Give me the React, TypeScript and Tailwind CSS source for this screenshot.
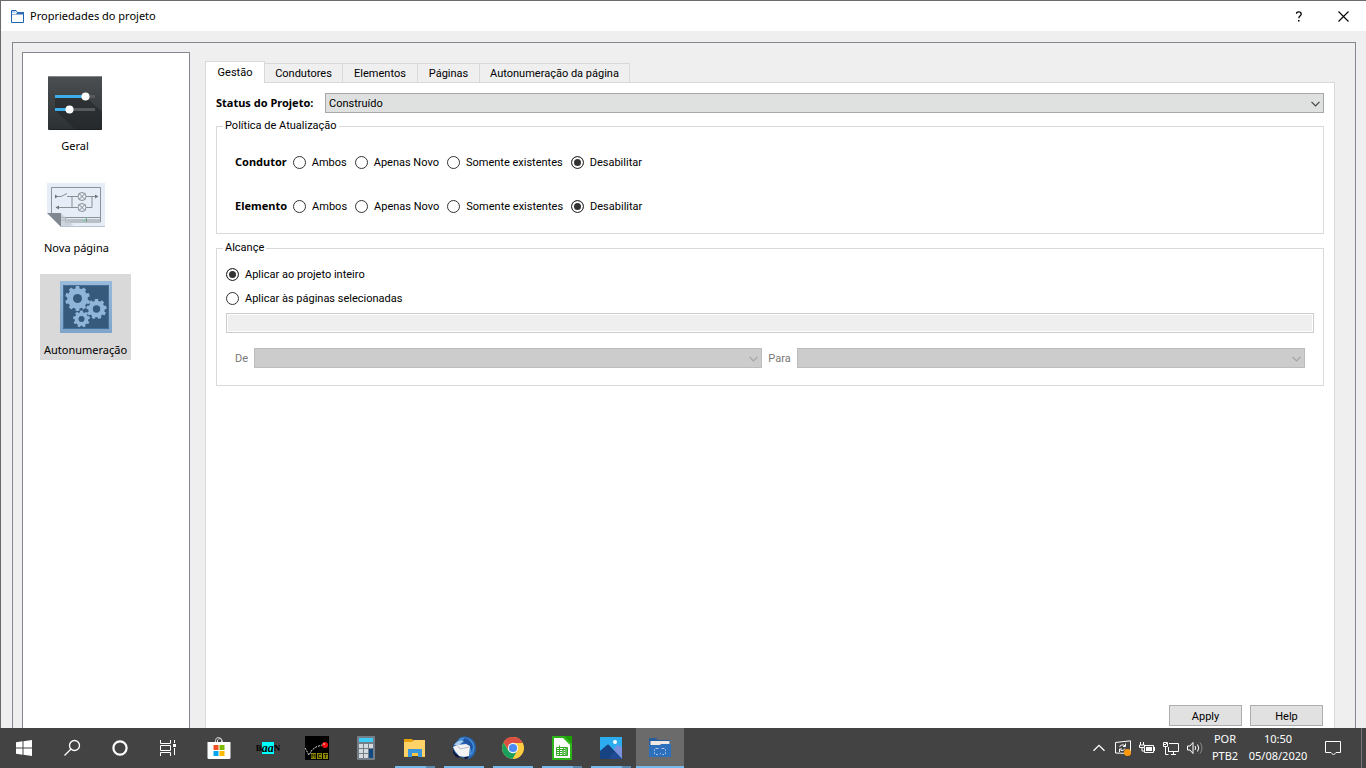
import React from "react";

const ui = "font-['Roboto','Noto_Sans',sans-serif]";
const strong = "font-['Noto_Sans','Open_Sans',sans-serif] font-bold";
const segoe = "font-['Noto_Sans','Open_Sans',sans-serif]";

/* ---------- Dialog icons ---------- */

function FolderIcon() {
  return (
    <svg width="13" height="13" viewBox="0 0 13 13" className="shrink-0" aria-hidden="true">
      <path d="M.5 12.500V.5H5l1.500 2h6v10z" fill="#fff" stroke="#1f62b4" />
      <path d="M0 4h5l1.500-2H13v2.500H0z" fill="#2a6cbc" />
      <path d="M1 1h3.500v2H1z" fill="#b9d2ef" />
    </svg>
  );
}

function SlidersIcon() {
  return (
    <svg width="54" height="54" viewBox="0 0 54 54" aria-hidden="true">
      <defs>
        <linearGradient id="sl" x1="0" y1="0" x2="0" y2="1">
          <stop offset="0" stopColor="#4b4f52" />
          <stop offset="1" stopColor="#2c3134" />
        </linearGradient>
      </defs>
      <rect width="54" height="54" rx="1" fill="url(#sl)" />
      <path d="M7 22 37 20 54 36V54H28L7 34z" fill="#1f2224" opacity=".5" />
      <path d="M1 .5h52" stroke="#85888a" />
      <path d="M1 53.500h52" stroke="#1e2123" />
      <path d="M37 20.500h10M22 33.500h25" stroke="#57595c" strokeWidth="3" />
      <path d="M7 20.500h30M7 33.500h15" stroke="#3daee9" strokeWidth="3" />
      <circle cx="37.500" cy="20.500" r="4" fill="#fff" />
      <circle cx="21.500" cy="33.500" r="4" fill="#fff" />
    </svg>
  );
}

function SheetIcon() {
  return (
    <svg width="58" height="44" viewBox="0 0 58 44" aria-hidden="true">
      <path d="M0 0h58v44H14L0 30z" fill="#e6edf6" />
      <path d="M14 43.500h44" stroke="#b9c5d6" />
      <path d="M4.500 30V4.500h49v34.500H18" fill="none" stroke="#8c9298" />
      <path d="M14 34.500h40M14 37h40M18.500 34v5M39.500 34v5" stroke="#8c9298" fill="none" />
      <g fill="none" stroke="#8a8f94">
        <path d="M8 13.500h6l6-3M20 13.500h30M25 13.500v11M45 13.500v11M9 24.500h36" />
        <circle cx="35" cy="13.500" r="4" fill="#e6edf6" />
        <circle cx="35" cy="24.500" r="4" fill="#e6edf6" />
        <path d="m32 10.500 6 6m0-6-6 6M32 21.500l6 6m0-6-6 6" />
      </g>
      <path d="M8 11.500l3 2-3 2zM48 11.500l3.500 2-3.500 2zM12 22.500l-3.500 2 3.500 2z" fill="#70767c" />
      <path d="m35 36.500 2 2 3-4" fill="none" stroke="#6fd09b" />
      <path d="M14 30l12 12-4 1-8 0z" fill="#c3c9d0" opacity=".7" />
      <path d="M0 30h14v14z" fill="#7f8790" />
    </svg>
  );
}

function gear(cx: number, cy: number, r: number, ri: number, teeth: number): string {
  const step = (Math.PI * 2) / teeth;
  const points: string[] = [];
  for (let i = 0; i < teeth; i++) {
    const a = i * step - Math.PI / 2;
    [
      [-0.32, ri],
      [-0.22, r],
      [0.22, r],
      [0.32, ri],
    ].forEach(([k, radius]) => {
      points.push(`${(cx + Math.cos(a + k * step) * radius).toFixed(2)} ${(cy + Math.sin(a + k * step) * radius).toFixed(2)}`);
    });
  }
  return `M${points.join("L")}Z`;
}

function GearsIcon() {
  return (
    <svg width="52" height="52" viewBox="0 0 52 52" aria-hidden="true">
      <defs>
        <linearGradient id="gf" x1="0" y1="0" x2="0" y2="1">
          <stop offset="0" stopColor="#98bbdb" />
          <stop offset="1" stopColor="#7fa5cb" />
        </linearGradient>
      </defs>
      <rect width="52" height="52" fill="url(#gf)" />
      <rect x="3.500" y="4.500" width="45" height="43" fill="#365a7c" stroke="#456f97" />
      <g fill="#8fb5d9">
        <path d={gear(17.5, 17.5, 12.5, 10.3, 10)} />
        <path d={gear(36.5, 28, 10.2, 8.2, 9)} />
        <path d={gear(21.5, 38, 8.5, 6.8, 9)} />
      </g>
      <g fill="#365a7c">
        <circle cx="17.500" cy="17.500" r="4.500" />
        <circle cx="36.500" cy="28" r="3.700" />
        <circle cx="21.500" cy="38" r="3" />
      </g>
    </svg>
  );
}

/* ---------- Form controls ---------- */

type ComboProps = { id: string; options?: string[]; disabled?: boolean };

function Combo({ id, options = [], disabled = false }: ComboProps) {
  return (
    <span className="relative flex min-w-0 flex-1">
      <select
        id={id}
        disabled={disabled}
        className="h-5 w-full appearance-none border border-[#a6a9a8] bg-[#dfe1e0] pl-[3px] pr-5 pt-0.5 text-[11px] leading-4 text-black opacity-100 disabled:border-[#bcbcbc] disabled:bg-[#cccccc]"
      >
        {options.map((o) => (
          <option key={o}>{o}</option>
        ))}
      </select>
      <svg
        width="9"
        height="6"
        viewBox="0 0 9 6"
        className={`pointer-events-none absolute right-1 top-2 ${disabled ? "text-[#a3a3a3]" : "text-[#444444]"}`}
        aria-hidden="true"
      >
        <path d="m.5.800 4 4 4-4" fill="none" stroke="currentColor" strokeWidth="1.200" />
      </svg>
    </span>
  );
}

function Radio({ name, label, checked = false }: { name: string; label: string; checked?: boolean }) {
  return (
    <label className="flex h-4 items-center gap-1.5 whitespace-nowrap">
      <input
        type="radio"
        name={name}
        defaultChecked={checked}
        className="size-[13px] shrink-0 appearance-none rounded-full border border-[#333333] bg-white checked:bg-[#333333] checked:shadow-[inset_0_0_0_2px_white]"
      />
      <span className="pt-0.5">{label}</span>
    </label>
  );
}

const policies = ["Ambos", "Apenas Novo", "Somente existentes", "Desabilitar"];

function PolicyRow({ title, name }: { title: string; name: string }) {
  return (
    <div role="radiogroup" aria-label={title} className="flex h-5 items-center gap-2">
      <div className="flex items-center gap-1.5">
        <span className={strong}>{title}</span>
        <Radio name={name} label={policies[0]} />
      </div>
      {policies.slice(1).map((p) => (
        <Radio key={p} name={name} label={p} checked={p === "Desabilitar"} />
      ))}
    </div>
  );
}

const pages = [
  { label: "Geral", icon: <SlidersIcon /> },
  { label: "Nova página", icon: <SheetIcon /> },
  { label: "Autonumeração", icon: <GearsIcon />, selected: true },
];

const tabs = [
  { label: "Gestão", width: "w-[60px]" },
  { label: "Condutores", width: "w-[78px]" },
  { label: "Elementos", width: "w-[75px]" },
  { label: "Páginas", width: "w-[62px]" },
  { label: "Autonumeração da página", width: "w-[150px]" },
];

function Dialog() {
  return (
    <main className="flex min-h-0 flex-1 flex-col overflow-hidden border-l border-t border-[#6b6b6b] bg-[#efefef]">
      <header className="flex h-[30px] shrink-0 items-center bg-white pl-2.5">
        <FolderIcon />
        <h1 className={`ml-1.5 flex-1 text-[11px] ${segoe}`}>Propriedades do projeto</h1>
        <button aria-label="Ajuda" className="flex h-full w-[45px] items-center justify-center">
          <svg width="8" height="11" viewBox="0 0 8 11" aria-hidden="true">
            <path d="M1.500 2.800Q1.500.800 3.800.800T6.200 2.900Q6.200 4 5 4.900T3.800 7.200" fill="none" stroke="#000" strokeWidth="1.300" />
            <path d="M3 9h1.500v1.500H3z" />
          </svg>
        </button>
        <button aria-label="Fechar" className="flex h-full w-[45px] items-center justify-center">
          <svg width="11" height="11" viewBox="0 0 11 11" aria-hidden="true">
            <path d="m.5.500 10 10m0-10-10 10" stroke="#000" strokeWidth="1.100" />
          </svg>
        </button>
      </header>

      <div className="ml-[11px] mr-2.5 mt-[11px] flex min-h-0 flex-1 gap-[15px] border border-b-0 border-[#828790] pl-[9px] pr-5 pt-[9px]">
        <nav className="flex w-[168px] shrink-0 flex-col items-start gap-4 border border-b-0 border-[#828790] bg-white pl-[17px] pt-[17px]">
          {pages.map((p) => (
            <button
              key={p.label}
              className={`flex h-[86px] min-w-[70px] flex-col items-center px-1 leading-5 ${segoe} ${p.selected ? "bg-[#d9d9d9]" : ""}`}
            >
              <span className="flex h-[66px] items-center justify-center">{p.icon}</span>
              {p.label}
            </button>
          ))}
        </nav>

        <div className="flex min-w-0 flex-1 flex-col pt-[9px]">
          <div role="tablist" className="z-10 -mb-px flex shrink-0 items-end">
            {tabs.map((t, i) => (
              <button
                key={t.label}
                role="tab"
                aria-selected={i === 0}
                className={`${t.width} whitespace-nowrap border border-[#d9d9d9] text-center ${
                  i === 0 ? "h-[22px] border-b-0 bg-white" : "h-5 border-l-0 bg-[#efefef] pt-0.5"
                }`}
              >
                {t.label}
              </button>
            ))}
          </div>
          <section className="flex min-h-0 flex-1 flex-col border border-b-0 border-[#d9d9d9] bg-white px-2.5 pb-0.5 pt-2.5">
            <div className="flex items-center gap-1.5">
              <label htmlFor="status" className={`w-[103px] whitespace-nowrap ${strong}`}>
                Status do Projeto:
              </label>
              <Combo id="status" options={["Construído"]} />
            </div>

            <fieldset className="mt-[5px] h-[116px] border border-[#d9d9d9] px-[18px] pt-[18px]">
              <legend className="-ml-3 px-0.5">Política de Atualização</legend>
              <div className="flex flex-col gap-6">
                <PolicyRow title="Condutor" name="condutor" />
                <PolicyRow title="Elemento" name="elemento" />
              </div>
            </fieldset>

            <fieldset className="mt-1.5 h-[146px] border border-[#d9d9d9] px-[9px] pt-2.5">
              <legend className="-ml-[3px] px-0.5">Alcançe</legend>
              <div className="flex flex-col gap-2">
                <Radio name="alcance" label="Aplicar ao projeto inteiro" checked />
                <Radio name="alcance" label="Aplicar às páginas selecionadas" />
              </div>
              <input
                disabled
                aria-label="Páginas selecionadas"
                className="mt-[7px] block h-5 w-full border border-[#cccccc] bg-[#efefef] shadow-[inset_0_0_0_1px_white]"
              />
              <div className="mt-[15px] flex items-center gap-1.5 px-[9px] text-[#787878]">
                <label htmlFor="de" className="pt-0.5">De</label>
                <Combo id="de" disabled />
                <label htmlFor="para" className="pt-0.5">Para</label>
                <Combo id="para" disabled />
              </div>
            </fieldset>

            <div className="mt-auto flex justify-end gap-2 pr-px">
              {["Apply", "Help"].map((b) => (
                <button key={b} className="h-[21px] w-[73px] border border-[#adadad] bg-[#e1e1e1] pt-0.5 leading-4">
                  {b}
                </button>
              ))}
            </div>
          </section>
        </div>
      </div>
    </main>
  );
}

/* ---------- Taskbar ---------- */

const icon = { width: 24, height: 24, viewBox: "0 0 24 24", "aria-hidden": true };

const system = [
  {
    name: "Iniciar",
    icon: (
      <svg {...icon}>
        <path d="M4 6.300 10.500 5.300V11.500H4zM11.500 5.200 20 4v7.500h-8.500zM4 12.500h6.500v6.200L4 17.700zM11.500 12.500H20V20l-8.500-1.200z" fill="#fff" />
      </svg>
    ),
  },
  {
    name: "Pesquisar",
    icon: (
      <svg {...icon} fill="none" stroke="#fff" strokeWidth="1.300">
        <circle cx="14.500" cy="9.500" r="5" />
        <path d="m11 13-6.500 6.500" />
      </svg>
    ),
  },
  {
    name: "Cortana",
    icon: (
      <svg {...icon}>
        <circle cx="12" cy="12" r="6.600" fill="none" stroke="#fff" strokeWidth="2.200" />
      </svg>
    ),
  },
  {
    name: "Visão de tarefas",
    icon: (
      <svg {...icon} fill="none" stroke="#fff">
        <path d="M4.500 4v3.500h10V4M4.500 20v-3.500h10V20M4.500 9.500h10v5h-10zM18.500 4v3M18.500 12v7" />
        <path d="M17 8h3v3h-3z" fill="#fff" stroke="none" />
      </svg>
    ),
  },
];

const apps = [
  {
    name: "Microsoft Store",
    icon: (
      <svg {...icon}>
        <path d="M8.500 7V4.500q0-3 3-3t3 3V7M10.500 7V4q1-1.500 3-1.500 2 .5 2 4" fill="none" stroke="#d8d8d8" />
        <path d="M.5 6h23v15.500q0 1.500-1.500 1.500H2Q.5 23 .5 21.500z" fill="#fff" />
        <path d="M6.500 9h5v5h-5z" fill="#f25022" />
        <path d="M12.500 9h5v5h-5z" fill="#7fba00" />
        <path d="M6.500 15h5v5h-5z" fill="#00a4ef" />
        <path d="M12.500 15h5v5h-5z" fill="#ffb900" />
      </svg>
    ),
  },
  {
    name: "Baan",
    icon: (
      <span className="flex items-center font-['Liberation_Serif',serif] text-[9px] font-bold leading-3 text-black">
        B<span className="bg-[#00ffff] text-[12px] italic leading-3">aa</span>N
      </span>
    ),
  },
  {
    name: "MCT",
    icon: (
      <svg {...icon}>
        <path d="M0 0h24v24H0z" fill="#000" />
        <path d="m0 12 4 7 3-5 4-3 6-2" fill="none" stroke="#ddd" strokeDasharray="2 1" />
        <circle cx="20" cy="9" r="3" fill="#f01010" />
        <circle cx="19" cy="8" r="1" fill="#ff9090" />
        <path d="M6 17h5v6H6zM12 17h5v6h-5zM18 17h5v6h-5z" fill="#8f8a00" />
        <path d="M7 22v-4l1.500 2L10 18v4M16 18.500h-2.500v3H16M19 18.500h3.500M20.500 18.500V22" fill="none" stroke="#2b2900" />
      </svg>
    ),
  },
  {
    name: "Calculadora",
    icon: (
      <svg {...icon}>
        <rect x="3" y="0" width="18" height="24" rx="1" fill="#737e89" />
        <path d="M5 2h14v4H5z" fill="#3ecbf5" />
        <path d="M5 8h4v4H5zM10 8h4v4h-4zM15 8h4v4h-4zM5 13h4v4H5zM10 13h4v4h-4zM5 18h4v4H5zM10 18h4v4h-4z" fill="#d6dbdf" />
        <path d="M15 13h4v9h-4z" fill="#124980" />
      </svg>
    ),
  },
  {
    name: "Explorador de Arquivos",
    state: "stacked",
    icon: (
      <svg {...icon}>
        <path d="M1 3h8l2 2h11v6H1z" fill="#e9a20c" />
        <path d="M1 6h8l2-2h11v16H1z" fill="#ffd368" />
        <path d="M5 21v-8h14v8h-4v-4H9v4z" fill="#3c96dc" />
        <path d="M1 20h4v1H1zM9 17h6v3H9zM19 20h3v1h-3z" fill="#fbc63f" />
      </svg>
    ),
  },
  {
    name: "Thunderbird",
    state: "running",
    icon: (
      <svg {...icon}>
        <path d="M1 10Q3 7 5 5l2-2q1-3 7-2.500 9 1.500 10 10.500 0 8-6 11.500l-4 .5-8-3Q1 17 1 10z" fill="#2766b4" />
        <path d="M8 2q7-2 12 3 4 5 1 12l-3 3Q19 9 14 6 10 4 5 6z" fill="#418fd4" />
        <path d="M13 2q6 2 8 8l-1 7q-1-6-5-9l-5-3z" fill="#2053a1" />
        <path d="M2 9q4-6 10-4L7 9z" fill="#a8cdee" />
        <path d="m1 11 4-2 9-1 4 2-1 10-4 1-6-1-4-5z" fill="#f3f3f4" />
        <path d="m5 9 3 4 9-2" fill="none" stroke="#b9bcc6" />
        <path d="m1 13 2 4 4 3 1 2-4-1-3-4zM12 21l5-.5-2 2.500h-2z" fill="#12163a" />
      </svg>
    ),
  },
  {
    name: "Chrome",
    state: "running",
    icon: (
      <svg {...icon}>
        <circle cx="12" cy="12" r="11" fill="#ffcd40" />
        <path d="M2.500 6.500A11 11 0 0 1 21.800 7H12L7.700 14.500z" fill="#dd4f43" />
        <path d="M2.500 6.500A11 11 0 0 0 11.500 23l4.800-8.500H7.200z" fill="#1a9f5c" />
        <circle cx="12" cy="12" r="5.200" fill="#f3f3f3" />
        <circle cx="12" cy="12" r="4.100" fill="#4c8bf5" />
      </svg>
    ),
  },
  {
    name: "LibreOffice Calc",
    state: "stacked",
    icon: (
      <svg {...icon}>
        <path d="M2 0h13l7 7v17H2z" fill="#2fb31b" />
        <path d="M4 2h9l7 7v13H4z" fill="#fff" />
        <path d="M15 0h7v7z" fill="#18a303" />
        <path d="M6.500 11.500h11v8h-11zM6.500 13.500h11M6.500 15.500h11M6.500 17.500h11M9.500 9.500v10M13.500 11.500v8" fill="none" stroke="#33a823" />
        <path d="M12 14h2v5h-2zM15 12h2v7h-2z" fill="#67c25c" />
      </svg>
    ),
  },
  {
    name: "Fotos",
    state: "stacked",
    icon: (
      <svg {...icon}>
        <path d="M1 1h22v22H1z" fill="#2cadef" />
        <path d="M23 11v12H9l8-13 2-1z" fill="#7992df" />
        <path d="m1 15 7-6q1-1 2 0l13 14H1z" fill="#174383" />
        <path d="m10 23 5-7 8 7z" fill="#204c97" />
        <circle cx="16" cy="6" r="2" fill="#fff" />
      </svg>
    ),
  },
  {
    name: "QElectroTech",
    state: "active",
    icon: (
      <svg {...icon}>
        <path d="M1 3q0-1 1-1h6l2 2h12v5H1z" fill="#255d9d" />
        <path d="M2.500 5h19v6h-19z" fill="#eee9e3" />
        <path d="M1 9h11l1-1h10v13H1z" fill="#2f70bd" />
        <path d="M7.500 12.500h3M13.500 12.500h3M6.500 13.500v1.500M6.500 16.500v1.500M17.500 13.500v1.500M17.500 16.500v1.500M8 18.500h2M12 17.500h1M14.500 18.500H16" fill="none" stroke="#a9c9ee" />
      </svg>
    ),
  },
];

const tile = "relative flex h-10 w-12 shrink-0 items-center justify-center";

function Taskbar() {
  return (
    <footer className={`flex h-10 shrink-0 items-center bg-[#434343] text-[11px] text-white ${segoe}`}>
      {system.map((s) => (
        <button key={s.name} aria-label={s.name} className={tile}>
          {s.icon}
        </button>
      ))}
      <div className="ml-[3px] flex gap-px">
        {apps.map((a) => (
          <button key={a.name} aria-label={a.name} className={`${tile} ${a.state === "active" ? "bg-[#6b6b6b]" : ""}`}>
            {a.icon}
            {a.state === "running" && <span className="absolute inset-x-1 bottom-0 h-0.5 bg-[#76b9ed]" />}
            {a.state === "active" && <span className="absolute inset-x-0 bottom-0 h-0.5 bg-[#76b9ed]" />}
            {a.state === "stacked" && (
              <span className="absolute inset-x-1 bottom-0 flex h-0.5">
                <span className="flex-1 bg-[#76b9ed]" />
                <span className="w-[9px] bg-[#5a89b0]" />
              </span>
            )}
          </button>
        ))}
      </div>

      <div className="ml-auto flex items-center">
        <button aria-label="Mostrar ícones ocultos" className="flex h-10 w-6 items-center justify-center">
          <svg width="12" height="8" viewBox="0 0 12 8" aria-hidden="true">
            <path d="m.5 6.800 5.500-5.500 5.500 5.500" fill="none" stroke="#fff" strokeWidth="1.300" />
          </svg>
        </button>
        <button aria-label="Windows Update" className="flex h-10 w-6 items-center justify-center">
          <svg width="16" height="16" viewBox="0 0 16 16" aria-hidden="true">
            <path d="M.5 2.500 15.500.800v12.700l-15-.5z" fill="none" stroke="#fff" />
            <path d="M4.500 7q1-3 4.500-2l1 1M10.500 3.500v3H8M10 8.500q-1 2.500-4 2l-1-1M4.500 12V9H7" fill="none" stroke="#fff" />
            <circle cx="12.500" cy="12.500" r="3.500" fill="#ff9a0d" />
          </svg>
        </button>
        <button aria-label="Bateria" className="flex h-10 w-6 items-center justify-center">
          <svg width="16" height="12" viewBox="0 0 16 12" fill="none" stroke="#fff" aria-hidden="true">
            <path d="M1.500 0v3M4.500 0v3M.5 3h5v2.500h-5zM3 5.500V9H5" />
            <path d="M6 3.500h8.500v7h-9V6" />
            <path d="M7 5h6v4H7zM15 5h1v4h-1z" fill="#fff" stroke="none" />
          </svg>
        </button>
        <button aria-label="Rede" className="flex h-10 w-6 items-center justify-center">
          <svg width="16" height="13" viewBox="0 0 16 13" fill="none" stroke="#fff" aria-hidden="true">
            <path d="M6 1.500h9.500v8h-10M.5.500h4v4h-4zM2.500 5v7.500h3M5.500 5v5M10.500 10v2.500M8 12.500h5" />
            <path d="m1 2 1 1 2-2" />
          </svg>
        </button>
        <button aria-label="Volume" className="flex h-10 w-6 items-center justify-center">
          <svg width="16" height="14" viewBox="0 0 16 14" fill="none" stroke="#fff" aria-hidden="true">
            <path d="M.5 5h2.500l3-3.500v11L3 9H.5z" />
            <path d="M8 5q1.500 2 0 4M10.500 3.500q2.500 3.500 0 7" />
            <path d="M13 1.500q4 5.500 0 11" stroke="#8a8a8a" />
          </svg>
        </button>
        <button className="w-9 pb-0.5 text-center leading-[17px]">
          POR
          <br />
          PTB2
        </button>
        <button className="w-[70px] whitespace-nowrap pb-0.5 text-center leading-[17px]">
          10:50
          <br />
          05/08/2020
        </button>
        <button aria-label="Notificações" className="flex h-10 w-10 items-center justify-center">
          <svg width="16" height="16" viewBox="0 0 16 16" aria-hidden="true">
            <path d="M.5 1.500h15v11H11l-2.500 2.500L6 12.500H.5z" fill="none" stroke="#fff" />
          </svg>
        </button>
        <button aria-label="Mostrar área de trabalho" className="ml-2 h-10 w-[5px] border-l border-[#777777]" />
      </div>
    </footer>
  );
}

export default function App() {
  return (
    <div className={`flex h-screen flex-col overflow-hidden text-[11px] leading-4 text-black ${ui}`}>
      <Dialog />
      <Taskbar />
    </div>
  );
}
